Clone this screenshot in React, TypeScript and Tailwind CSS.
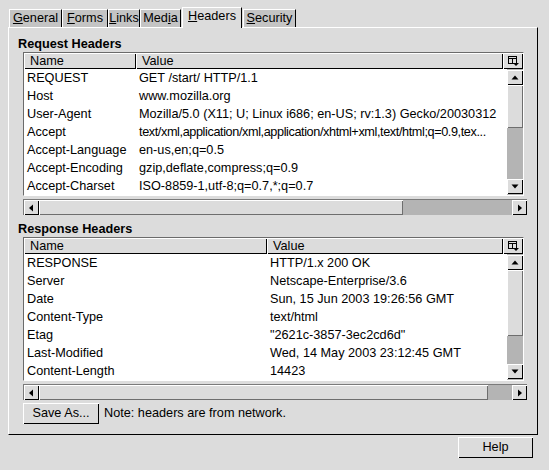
import React from 'react';

type Row = [string, string, boolean?];

const raised = 'bg-[#dcdcdc] shadow-[inset_1px_1px_0_#ffffff,inset_-1px_-1px_0_#000000]';
const raisedSoft = 'bg-[#dcdcdc] shadow-[inset_1px_1px_0_#ffffff,inset_-1px_-1px_0_#6e6e6e]';

const requestRows: Row[] = [
  ['REQUEST', 'GET /start/ HTTP/1.1'],
  ['Host', 'www.mozilla.org'],
  ['User-Agent', 'Mozilla/5.0 (X11; U; Linux i686; en-US; rv:1.3) Gecko/20030312'],
  ['Accept', 'text/xml,application/xml,application/xhtml+xml,text/html;q=0.9,tex...', true],
  ['Accept-Language', 'en-us,en;q=0.5'],
  ['Accept-Encoding', 'gzip,deflate,compress;q=0.9'],
  ['Accept-Charset', 'ISO-8859-1,utf-8;q=0.7,*;q=0.7'],
];

const responseRows: Row[] = [
  ['RESPONSE', 'HTTP/1.x 200 OK'],
  ['Server', 'Netscape-Enterprise/3.6'],
  ['Date', 'Sun, 15 Jun 2003 19:26:56 GMT'],
  ['Content-Type', 'text/html'],
  ['Etag', '"2621c-3857-3ec2cd6d"'],
  ['Last-Modified', 'Wed, 14 May 2003 23:12:45 GMT'],
  ['Content-Length', '14423'],
];

function Arrow({ dir }: { dir: 'up' | 'down' | 'left' | 'right' }) {
  const points = {
    up: '0.5,5.5 7.5,5.5 4,1.5',
    down: '0.5,1.5 7.5,1.5 4,5.5',
    left: '5,0.5 5,7.5 1,4',
    right: '2,0.5 2,7.5 6,4',
  }[dir];
  return (
    <svg width="8" height="8" viewBox="0 0 8 8">
      <polygon points={points} fill="#000" />
    </svg>
  );
}

function ColumnPicker() {
  return (
    <svg width="11" height="10" viewBox="0 0 11 10">
      <rect x="0.5" y="0.5" width="8" height="7" fill="none" stroke="#000" />
      <line x1="0" y1="2.5" x2="9" y2="2.5" stroke="#000" />
      <line x1="4.5" y1="2.5" x2="4.5" y2="8" stroke="#000" />
      <polygon points="5,7 11,7 8,10" fill="#000" />
    </svg>
  );
}

function VScroll({ thumb }: { thumb: number }) {
  return (
    <div className="w-[16px] flex flex-col bg-[#b4b4b4] py-[1px]">
      <div className={`h-[15px] flex items-center justify-center ${raised}`}>
        <Arrow dir="up" />
      </div>
      <div className={raisedSoft} style={{ height: thumb }} />
      <div className="flex-1" />
      <div className={`h-[15px] flex items-center justify-center ${raised}`}>
        <Arrow dir="down" />
      </div>
    </div>
  );
}

function HScroll({ thumb }: { thumb: number }) {
  return (
    <div className="w-[504px] h-[16px] mt-[3px] flex bg-[#b4b4b4] border-t border-l border-[#7a7a7a]">
      <div className={`w-[15px] flex items-center justify-center ${raised}`}>
        <Arrow dir="left" />
      </div>
      <div className={raisedSoft} style={{ width: thumb }} />
      <div className="flex-1" />
      <div className={`w-[15px] flex items-center justify-center ${raised}`}>
        <Arrow dir="right" />
      </div>
    </div>
  );
}

function HeaderTree({ rows, nameWidth, thumb }: { rows: Row[]; nameWidth: number; thumb: number }) {
  return (
    <div className="w-[501px] mt-[1px] border-t border-l border-[#6b6b6b] border-r border-b border-r-[#ffffff] border-b-[#ffffff]">
      <div className="flex h-[16px] leading-[16px]">
        <div className={`pl-[6px] ${raised}`} style={{ width: nameWidth }}>
          Name
        </div>
        <div className={`flex-1 pl-[6px] ${raised}`}>Value</div>
        <div className={`w-[20px] flex items-center justify-center ${raised}`}>
          <ColumnPicker />
        </div>
      </div>
      <div className="flex h-[126px] bg-white">
        <div className="flex-1 flex flex-col min-w-0">
          {rows.map(([name, value, tight]) => (
            <div key={name} className="flex h-[18px] leading-[18px] whitespace-nowrap">
              <div className="pl-[3px] overflow-hidden shrink-0" style={{ width: nameWidth }}>
                {name}
              </div>
              <div className={`flex-1 min-w-0 pl-[3px] ${tight ? 'tracking-[-0.4px]' : ''}`}>{value}</div>
            </div>
          ))}
        </div>
        <VScroll thumb={thumb} />
      </div>
    </div>
  );
}

const tabs = [
  { pre: '', key: 'G', post: 'eneral', w: 'w-[53px]' },
  { pre: '', key: 'F', post: 'orms', w: 'w-[46px]' },
  { pre: '', key: 'L', post: 'inks', w: 'w-[32px]' },
  { pre: 'Med', key: 'i', post: 'a', w: 'w-[41px]' },
  { pre: '', key: 'H', post: 'eaders', w: 'w-[60px]', active: true },
  { pre: '', key: 'S', post: 'ecurity', w: 'w-[53px]' },
];

export default function App() {
  return (
    <div className="w-[549px] h-[470px] bg-[#dcdcdc] text-black text-[12.7px] font-['Liberation_Sans',Arial,sans-serif] pt-[7px] pl-[8px] pr-[11px] flex flex-col">
      <div className="flex items-end h-[20px] pl-[1px]">
        {tabs.map((t) =>
          t.active ? (
            <div
              key={t.key}
              className={`${t.w} h-[21px] -mb-[1px] relative z-10 bg-[#dcdcdc] border-t border-l border-white border-r border-r-black mx-[1px] text-center leading-[17px]`}
            >
              {t.pre}
              <span className="underline">{t.key}</span>
              {t.post}
            </div>
          ) : (
            <div
              key={t.key}
              className={`${t.w} h-[18px] bg-[#c4c4c4] border-t border-l border-white border-r border-r-black text-center leading-[17px]`}
            >
              {t.pre}
              <span className="underline">{t.key}</span>
              {t.post}
            </div>
          )
        )}
      </div>

      <div className="h-[408px] border-t border-l border-white border-r border-b border-r-black border-b-black pl-[14px] pt-[9px] flex flex-col">
        <div className="-ml-[5px] h-[14px] leading-[14px] font-bold">Request Headers</div>
        <HeaderTree rows={requestRows} nameWidth={112} thumb={43} />
        <HScroll thumb={364} />

        <div className="-ml-[5px] mt-[7px] h-[14px] leading-[14px] font-bold">Response Headers</div>
        <HeaderTree rows={responseRows} nameWidth={243} thumb={66} />
        <HScroll thumb={449} />

        <div className="flex items-center mt-[3px] gap-[5px]">
          <button className={`w-[76px] h-[21px] ${raised}`}>Save As...</button>
          <span>Note: headers are from network.</span>
        </div>
      </div>

      <div className="flex justify-end pr-[5px] mt-[2px]">
        <button className={`w-[75px] h-[21px] ${raised}`}>Help</button>
      </div>
    </div>
  );
}
